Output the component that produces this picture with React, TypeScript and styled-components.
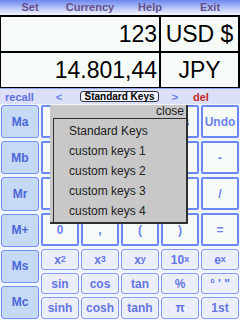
import React from "react";
import styled, { createGlobalStyle } from "styled-components";

const GlobalStyle = createGlobalStyle`
  html, body {
    margin: 0;
    padding: 0;
    background: #f2f5fb;
  }
  body {
    font-family: "Liberation Sans", Arial, sans-serif;
  }
`;

const Screen = styled.div`
  width: 240px;
  height: 320px;
  overflow: hidden;
  display: flex;
  flex-direction: column;
  background: #f2f5fb;
`;

const MenuBar = styled.div`
  height: 15px;
  display: flex;
  background: linear-gradient(to bottom, #6c86ee 0%, #b8c6f6 55%, #f4f6fe 100%);
`;

const MenuItem = styled.div`
  flex: 1;
  text-align: center;
  font-size: 11px;
  font-weight: bold;
  line-height: 15px;
  color: #664f8a;
`;

const Display = styled.div`
  display: grid;
  grid-template-columns: 158px 1fr;
  grid-template-rows: 34px 34px;
  gap: 2px;
  background: #000;
  border-top: 2px solid #000;
  border-bottom: 1px solid #000;
  border-left: 1px solid #000;
  border-right: 2px solid #000;
`;

const Cell = styled.div<{ align: "right" | "center" }>`
  background: #f7fbf7;
  display: flex;
  align-items: center;
  justify-content: ${(props) => (props.align === "right" ? "flex-end" : "center")};
  padding-right: ${(props) => (props.align === "right" ? "2px" : "0")};
  font-size: 23px;
  color: #000;
  line-height: 1;
`;

const RecallBar = styled.div`
  height: 15px;
  border-top: 1px solid #93a3f0;
  background: #dcdff8;
  display: flex;
  align-items: center;
  padding-left: 5px;
  font-size: 11px;
  font-weight: bold;
`;

const RecallLabel = styled.div`
  width: 44px;
  color: #5f70e0;
`;

const Arrow = styled.div<{ w: number }>`
  width: ${(props) => props.w}px;
  text-align: center;
  color: #6a7ee8;
`;

const KeySetBox = styled.div`
  width: 79px;
  height: 11px;
  margin-left: 11px;
  box-sizing: border-box;
  border: 1px solid #303048;
  border-radius: 3px;
  background: #f4f6fe;
  color: #000;
  font-size: 10px;
  line-height: 9px;
  text-align: center;
`;

const DelLabel = styled.div`
  padding-left: 2px;
  color: #c42828;
`;

const Keypad = styled.div`
  position: relative;
  flex: 1;
  display: flex;
  gap: 2px;
  padding: 1px 1px 1px 1px;
`;

const MemoryColumn = styled.div`
  width: 38px;
  display: flex;
  flex-direction: column;
  gap: 3px;
`;

const MemoryKey = styled.div`
  flex: 1;
  box-sizing: border-box;
  background: #c6daf6;
  border: 1px solid #7290f0;
  border-radius: 3px;
  display: flex;
  align-items: center;
  justify-content: center;
  font-size: 12px;
  font-weight: bold;
  color: #4c66d8;
`;

const KeyGrid = styled.div`
  display: grid;
  grid-template-columns: repeat(5, 38px);
  grid-template-rows: 33px 33px 33px 33px 21px 21px 22px;
  column-gap: 2px;
  row-gap: 3px;
`;

const Key = styled.div<{ kind: "number" | "func" }>`
  box-sizing: border-box;
  display: flex;
  align-items: center;
  justify-content: center;
  font-size: 12px;
  font-weight: bold;
  background: ${(props) => (props.kind === "number" ? "#f6fbf8" : "#eceefc")};
  border: ${(props) => (props.kind === "number" ? "2px solid #6a88f8" : "1px solid #8a9af0")};
  border-radius: ${(props) => (props.kind === "number" ? "2px" : "3px")};
  color: ${(props) => (props.kind === "number" ? "#6a80f0" : "#6276e2")};

  sup {
    font-size: 9px;
    line-height: 0;
    position: relative;
    top: -1px;
    vertical-align: super;
  }
`;

const Popup = styled.div`
  position: absolute;
  left: 50px;
  top: 1px;
  width: 136px;
  height: 117px;
  background: #c8c8c8;
  border-right: 2px solid #303030;
  border-bottom: 2px solid #303030;
  display: flex;
  flex-direction: column;
  font-size: 12px;
  color: #202020;
`;

const PopupHeader = styled.div`
  height: 13px;
  line-height: 13px;
  text-align: right;
  padding-right: 2px;
`;

const PopupList = styled.div`
  flex: 1;
  margin-left: 3px;
  border-top: 1px solid #303030;
  border-left: 1px solid #303030;
  padding: 2px 0 0 15px;
`;

const PopupItem = styled.div`
  height: 20px;
  line-height: 20px;
`;

const menuItems = ["Set", "Currency", "Help", "Exit"];
const memoryKeys = ["Ma", "Mb", "Mr", "M+", "Ms", "Mc"];
const numberKeys = [
  "7", "8", "9", "Cls", "Undo",
  "4", "5", "6", "*", "-",
  "1", "2", "3", "+", "/",
  "0", ",", "(", ")", "=",
];
const funcKeys: { base: string; sup?: string }[] = [
  { base: "x", sup: "2" },
  { base: "x", sup: "3" },
  { base: "x", sup: "y" },
  { base: "10", sup: "x" },
  { base: "e", sup: "x" },
  { base: "sin" },
  { base: "cos" },
  { base: "tan" },
  { base: "%" },
  { base: "° ' \"" },
  { base: "sinh" },
  { base: "cosh" },
  { base: "tanh" },
  { base: "π" },
  { base: "1st" },
];
const keySets = ["Standard Keys", "custom keys 1", "custom keys 2", "custom keys 3", "custom keys 4"];

const App: React.FC = () => {
  return (
    <>
      <GlobalStyle />
      <Screen>
        <MenuBar>
          {menuItems.map((m) => (
            <MenuItem key={m}>{m}</MenuItem>
          ))}
        </MenuBar>
        <Display>
          <Cell align="right">123</Cell>
          <Cell align="center">USD $</Cell>
          <Cell align="right">14.801,44</Cell>
          <Cell align="center">JPY</Cell>
        </Display>
        <RecallBar>
          <RecallLabel>recall</RecallLabel>
          <Arrow w={20}>&lt;</Arrow>
          <KeySetBox>Standard Keys</KeySetBox>
          <Arrow w={32}>&gt;</Arrow>
          <DelLabel>del</DelLabel>
        </RecallBar>
        <Keypad>
          <MemoryColumn>
            {memoryKeys.map((k) => (
              <MemoryKey key={k}>{k}</MemoryKey>
            ))}
          </MemoryColumn>
          <KeyGrid>
            {numberKeys.map((k, i) => (
              <Key kind="number" key={"n" + i}>
                {k}
              </Key>
            ))}
            {funcKeys.map((k, i) => (
              <Key kind="func" key={"f" + i}>
                {k.base}
                {k.sup && <sup>{k.sup}</sup>}
              </Key>
            ))}
          </KeyGrid>
          <Popup>
            <PopupHeader>close</PopupHeader>
            <PopupList>
              {keySets.map((s) => (
                <PopupItem key={s}>{s}</PopupItem>
              ))}
            </PopupList>
          </Popup>
        </Keypad>
      </Screen>
    </>
  );
};

export default App;
